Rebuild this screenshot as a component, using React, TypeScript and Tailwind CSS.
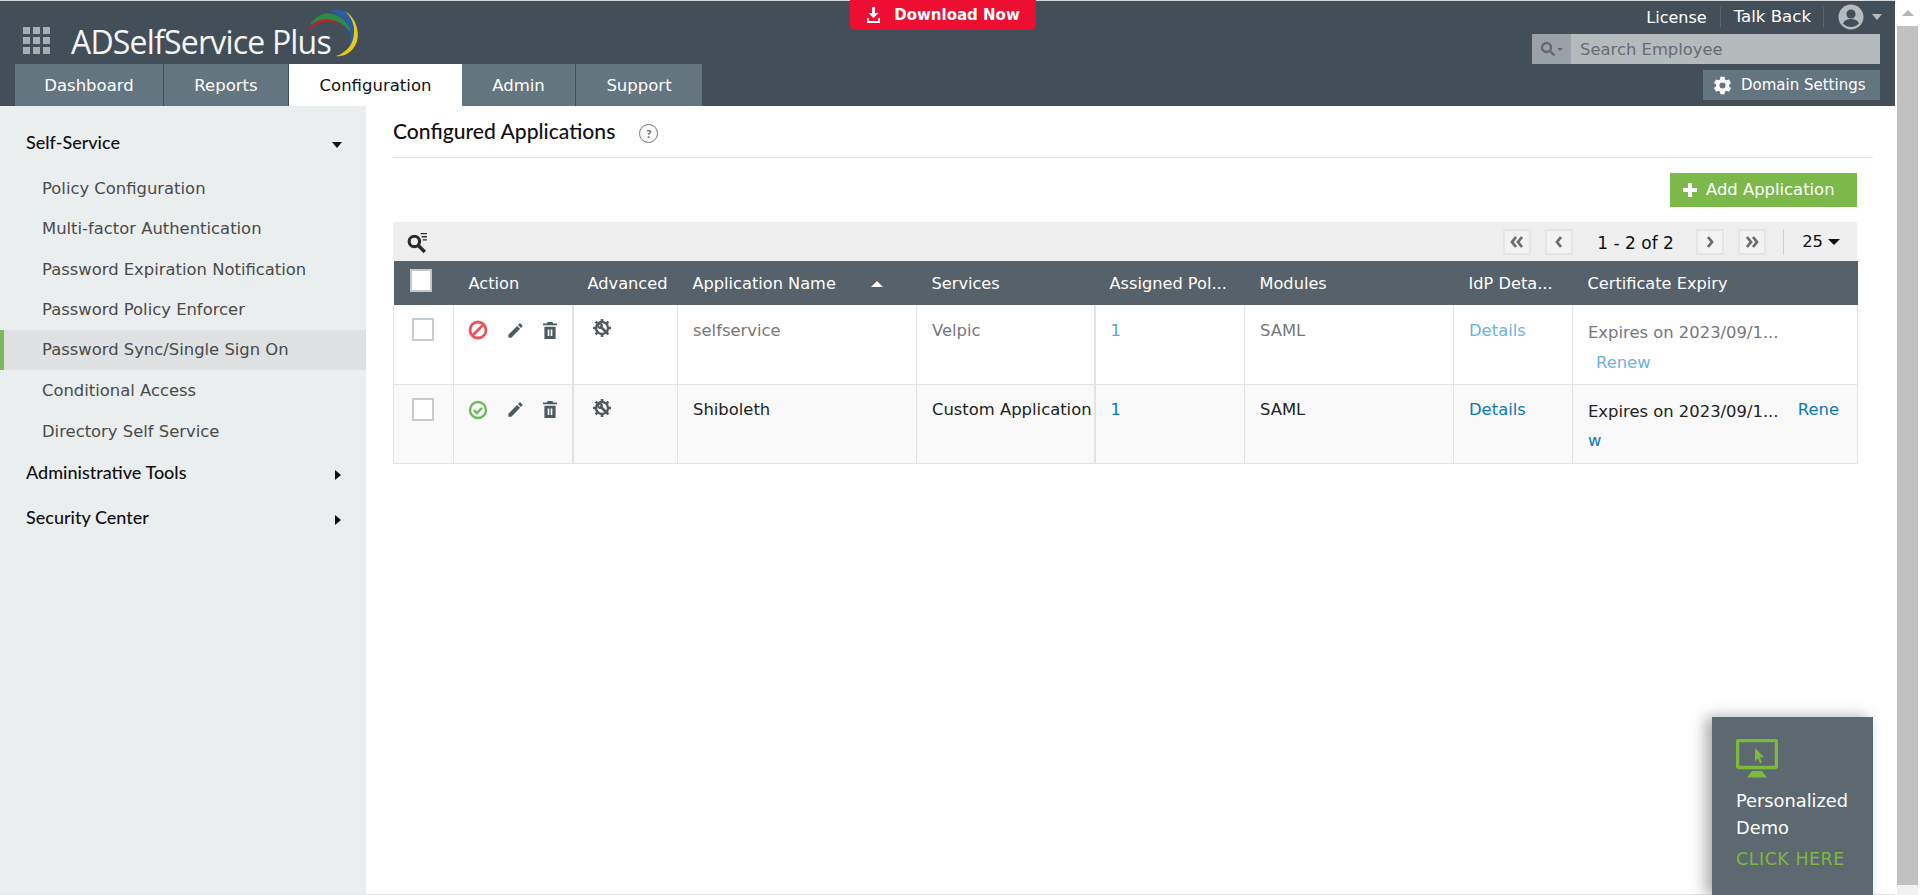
import React from "react";

const body = "font-['DejaVu_Sans',sans-serif]";

function Logo() {
  return (
    <svg width="90" height="64" viewBox="0 0 90 64" className="absolute left-[290px] top-[-1px]">
      <path d="M40 11 C52 7 62 14 65 26 C67 34 64 41 60 45 C63 31 55 15 40 11 Z" fill="#2a5ca5" />
      <path d="M20 25 C28 11 46 9 57 24 C60 28 60 30 60 32 C52 20 36 15 20 25 Z" fill="#2e8b45" />
      <path d="M18 33 C21 20 38 14 50 25 C38 19 26 21 18 33 Z" fill="#c81e2e" />
      <path d="M55 11 C69 20 72 40 62 50 C57 55 51 57 46 56 C56 53 63 45 64 34 C65 24 61 17 55 11 Z" fill="#e8c81a" />
    </svg>
  );
}

function Pencil() {
  return (
    <svg width="19" height="19" viewBox="0 0 24 24" fill="#4c5a62">
      <path d="M3 17.250V21h3.750L17.810 9.940l-3.750-3.750L3 17.250zM20.710 7.040a1 1 0 0 0 0-1.410l-2.340-2.340a1 1 0 0 0-1.410 0l-1.830 1.830 3.750 3.750 1.830-1.830z" />
    </svg>
  );
}

function Trash() {
  return (
    <svg width="14" height="17" viewBox="0 0 15 18" fill="#4c5a62">
      <path d="M5 0h5l1 1.500h4V3.500H0V1.500h4L5 0z" />
      <path d="M1.500 5h12v13h-12V5zM5 8v7h1.800V8H5zm3.200 0v7H10V8H8.200z" fillRule="evenodd" />
    </svg>
  );
}

function GearWrench() {
  return (
    <svg width="20" height="20" viewBox="0 0 20 20" fill="none" stroke="#55595d">
      <circle cx="10" cy="10" r="6" strokeWidth="2.400" />
      <path strokeWidth="2.600" d="M10 1v2.500M10 16.500V19M1 10h2.500M16.500 10H19M3.600 3.600l1.800 1.800M14.600 14.600l1.800 1.800M16.400 3.600l-1.800 1.800M5.400 14.600l-1.800 1.800" />
      <path d="M8 8l7 7" strokeWidth="2.600" />
      <circle cx="8" cy="8" r="2" strokeWidth="1.800" />
    </svg>
  );
}

function StatusBan() {
  return (
    <svg width="20" height="20" viewBox="0 0 20 20" fill="none" stroke="#e9545a" strokeWidth="2.800">
      <circle cx="10" cy="10" r="8" />
      <path d="M15.500 4.500l-11 11" />
    </svg>
  );
}

function StatusOk() {
  return (
    <svg width="20" height="20" viewBox="0 0 20 20" fill="none" stroke="#6dbb5f" strokeWidth="2.400">
      <circle cx="10" cy="10" r="8" />
      <path d="M6 10.200l3 3 5-5.400" />
    </svg>
  );
}

function Checkbox({ header }: { header?: boolean }) {
  return (
    <span
      className={
        header
          ? "block w-[22px] h-[23px] bg-white border-2 border-[#c4c8cb]"
          : "block w-[22px] h-[23px] bg-white border-2 border-[#c9cccf]"
      }
    />
  );
}

function PageBtn({ children }: { children: React.ReactNode }) {
  return (
    <span className="w-[28px] h-[26px] flex items-center justify-center border-2 border-[#e6e6e6] bg-[#f3f3f3]">
      {children}
    </span>
  );
}

function Chevrons({ dir, double }: { dir: "l" | "r"; double?: boolean }) {
  const d = dir === "l" ? "M6 1L2 6l4 5" : "M2 1l4 5-4 5";
  const d2 = dir === "l" ? "M12 1L8 6l4 5" : "M8 1l4 5-4 5";
  return (
    <svg width={double ? 14 : 8} height="12" viewBox={double ? "0 0 14 12" : "0 0 8 12"} fill="none" stroke="#6c6c6c" strokeWidth="2.800">
      <path d={d} />
      {double && <path d={d2} />}
    </svg>
  );
}

const sideItems = [
  "Policy Configuration",
  "Multi-factor Authentication",
  "Password Expiration Notification",
  "Password Policy Enforcer",
  "Password Sync/Single Sign On",
  "Conditional Access",
  "Directory Self Service",
];

const tabs = [
  { t: "Dashboard", w: "w-[149px]" },
  { t: "Reports", w: "w-[125px]" },
  { t: "Configuration", w: "w-[173px]", active: true },
  { t: "Admin", w: "w-[114px]" },
  { t: "Support", w: "w-[127px]" },
];

const th = "text-left font-normal text-white pl-[15px] pt-[2px] whitespace-nowrap overflow-hidden text-[16.200px]";
const td = "align-top pl-[15px] pt-[13px] leading-[24px] border-r border-b border-[#e3e3e3] whitespace-nowrap overflow-hidden";
const tdFirst = "align-top pl-[15px] pt-[14px] leading-[24px] border-r border-b border-[#e3e3e3] whitespace-nowrap overflow-hidden";

export default function App() {
  return (
    <div className={`relative flex h-[895px] w-full overflow-hidden bg-white text-[16.400px] ${body}`}>
      <div className="flex flex-col w-[1895px] shrink-0 h-full border-b border-[#e3e5e6]">
        <header className="relative flex justify-between h-[106px] shrink-0 bg-[#434f58] border-t border-[#d4d6d8]">
          <div className="relative flex flex-col justify-end pl-[15px]">
            <div className="absolute left-[23px] top-[26px] grid grid-cols-3 gap-[3px]">
              {Array.from({ length: 9 }).map((_, i) => (
                <span key={i} className="w-[7px] h-[7px] bg-[#a9aeb2]" />
              ))}
            </div>
            <span className="absolute left-[71px] top-[22px] text-[32px] leading-[38px] text-[#f4f5f5] font-['Open_Sans',sans-serif] tracking-[-0.800px] whitespace-nowrap">
              ADSelfService Plus
            </span>
            <Logo />
            <nav className="flex h-[42px]">
              {tabs.map((t) => (
                <span
                  key={t.t}
                  className={
                    t.active
                      ? `${t.w} flex items-center justify-center pt-[2px] bg-white text-[#111] text-[16.500px]`
                      : `${t.w} flex items-center justify-center pt-[2px] bg-[#63757f] text-white text-[16.500px] border-r border-[#434f58]`
                  }
                >
                  {t.t}
                </span>
              ))}
            </nav>
          </div>
          <span className="absolute left-[850px] top-[-1px] w-[186px] h-[30px] bg-[#ee0e32] rounded-b-[5px] flex items-center justify-center gap-[13px] text-white text-[15px] font-bold">
            <svg width="15" height="16" viewBox="0 0 15 16" fill="#fff">
              <path d="M6 0h3v6h3.500L7.500 11 2.500 6H6V0z" />
              <path d="M1 11h1.800v3h9.400v-3H14v5H1z" />
            </svg>
            Download Now
          </span>
          <div className="flex flex-col items-end pr-[15px]">
            <div className="flex items-center h-[31px] text-white text-[16.400px]">
              <span className="pt-[2px] text-[16px]">License</span>
              <span className="w-px h-[20px] bg-[#5b6770] mx-[13px]" />
              <span className="pt-[2px] text-[16.600px]">Talk Back</span>
              <span className="w-px h-[20px] bg-[#5b6770] ml-[12px] mr-[13px]" />
              <svg width="26" height="26" viewBox="0 0 26 26" className="ml-px">
                <circle cx="13" cy="13" r="12.500" fill="#b4babd" />
                <circle cx="13" cy="10" r="4.600" fill="#434f58" />
                <path d="M5 19.500c1.500-3.500 5-4.500 8-4.500s6.500 1 8 4.500c-2 2-5 3.500-8 3.500s-6-1.500-8-3.500z" fill="#434f58" />
              </svg>
              <span className="ml-[8px] mr-[-2px] w-0 h-0 border-x-[5.500px] border-x-transparent border-t-[6px] border-t-[#b4babd]" />
            </div>
            <div className="flex w-[348px] h-[30px] mt-[2px] bg-[#b5babd]">
              <span className="w-[39px] bg-[#9aa2a7] flex items-center justify-center gap-[1px]">
                <svg width="18" height="16" viewBox="0 0 18 16" fill="none" stroke="#5f6b72" strokeWidth="2.400">
                  <circle cx="6.500" cy="6.500" r="4.500" />
                  <path d="M10 10l4.500 4.500" />
                </svg>
                <span className="w-0 h-0 border-x-[3px] border-x-transparent border-t-[3px] border-t-[#5f6b72] ml-[-2px]" />
              </span>
              <span className="flex items-center pl-[9px] pt-[2px] text-[#666e73] text-[16.400px]">Search Employee</span>
            </div>
            <div className="flex items-center w-[177px] h-[30px] mt-[6px] bg-[#63757f] text-white text-[15px] pl-[9px] gap-[8px]">
              <svg width="21" height="21" viewBox="0 0 24 24" fill="#fff">
                <path d="M19.400 13a7.500 7.500 0 0 0 0-2l2.400-1.900-2.400-4.100-2.800 1.100a7.500 7.500 0 0 0-1.800-1L14.400 2H9.600l-.4 3.100a7.500 7.500 0 0 0-1.800 1L4.600 5 2.200 9.100 4.600 11a7.500 7.500 0 0 0 0 2l-2.400 1.900 2.400 4.100 2.800-1.100a7.500 7.500 0 0 0 1.800 1l.4 3.100h4.800l.4-3.100a7.500 7.500 0 0 0 1.800-1l2.800 1.100 2.400-4.100zM12 15.500a3.500 3.500 0 1 1 0-7 3.500 3.500 0 0 1 0 7z" />
              </svg>
              Domain Settings
            </div>
          </div>
        </header>

        <div className="flex flex-1 min-h-0">
          <aside className="w-[366px] shrink-0 bg-[#ebeeef] pt-[16px]">
            <div className="flex items-center justify-between h-[40px] pl-[26px] pr-[24px] text-[18px] font-medium text-[#111] font-['Lato',sans-serif]">
              Self-Service
              <span className="w-0 h-0 border-x-[5px] border-x-transparent border-t-[6px] border-t-[#111] mt-[5px]" />
            </div>
            <div className="h-[6px]" />
            {sideItems.map((s, i) => (
              <div
                key={s}
                className={
                  i === 4
                    ? "flex items-center h-[40px] pl-[38px] pt-[1px] bg-[#e0e1e3] border-l-[4px] border-[#7db85c] text-[#4a4a4a]"
                    : i > 4
                    ? "flex items-center h-[41px] pl-[42px] pt-[2px] text-[#4a4a4a]"
                    : "flex items-center h-[40.500px] pl-[42px] pt-[2px] text-[#4a4a4a]"
                }
              >
                {s}
              </div>
            ))}
            <div className="-mt-[2px]">
              {["Administrative Tools", "Security Center"].map((s) => (
                <div key={s} className="flex items-center justify-between h-[45px] pl-[26px] pr-[25px] text-[18px] font-medium text-[#111] font-['Lato',sans-serif]">
                  {s}
                  <span className="w-0 h-0 border-y-[5px] border-y-transparent border-l-[6px] border-l-[#111] mt-[5px]" />
                </div>
              ))}
            </div>
          </aside>

          <main className="flex-1 min-w-0 pl-[27px] pr-[22px]">
            <div className="flex items-center h-[52px] pb-[2px] border-b border-[#e3e3e3] font-['Lato',sans-serif] text-[21.100px] font-medium text-[#111]">
              Configured Applications
              <span className="ml-[24px] mt-[6px] w-[19px] h-[19px] rounded-full border-[1.500px] border-[#777] text-[#666] text-[12px] leading-none flex items-center justify-center font-bold">
                ?
              </span>
            </div>
            <div className="w-[1464px]">
              <div className="flex justify-end pt-[15px] pb-[15px]">
                <span className="flex items-center w-[187px] h-[34px] bg-[#7db84b] text-white text-[16.400px] pl-[13px] gap-[9px]">
                  <svg width="14" height="14" viewBox="0 0 14 14" fill="#fff">
                    <path d="M5 0h4v5h5v4H9v5H5V9H0V5h5z" />
                  </svg>
                  Add Application
                </span>
              </div>
              <div className="flex items-center h-[39px] bg-[#efefef] pl-[13px]">
                <svg width="23" height="23" viewBox="0 0 22 22" fill="none" stroke="#2c2c2c" className="mt-[2px]">
                  <circle cx="8" cy="10" r="5" strokeWidth="3" />
                  <path d="M12 14l6 6" strokeWidth="3.400" />
                  <path d="M14 2.500h6M15 5.500h5M16 8.500h4" strokeWidth="1.200" />
                </svg>
                <div className="ml-auto flex items-center">
                  <PageBtn><Chevrons dir="l" double /></PageBtn>
                  <span className="w-[14px]" />
                  <PageBtn><Chevrons dir="l" /></PageBtn>
                  <span className="w-[123px] pl-[2px] text-center text-[#111] text-[17px] mt-[4px]">1 - 2 of 2</span>
                  <PageBtn><Chevrons dir="r" /></PageBtn>
                  <span className="w-[14px]" />
                  <PageBtn><Chevrons dir="r" double /></PageBtn>
                  <span className="w-px h-[26px] bg-[#cfcfcf] ml-[17px] mr-[18px]" />
                  <span className="text-[#111] text-[16.400px] mt-[1px]">25</span>
                  <span className="ml-[5px] mr-[17px] w-0 h-0 border-x-[6.500px] border-x-transparent border-t-[6.500px] border-t-[#111]" />
                </div>
              </div>
              <table className="table-fixed border-collapse w-[1464px]">
                <colgroup>
                  <col className="w-[60px]" />
                  <col className="w-[119px]" />
                  <col className="w-[105px]" />
                  <col className="w-[239px]" />
                  <col className="w-[178px]" />
                  <col className="w-[150px]" />
                  <col className="w-[209px]" />
                  <col className="w-[119px]" />
                  <col className="w-[285px]" />
                </colgroup>
                <thead>
                  <tr className="h-[44px] bg-[#566169]">
                    <th className="pl-[16px] align-top pt-[8px]"><Checkbox header /></th>
                    <th className={th}>Action</th>
                    <th className={th}>Advanced</th>
                    <th className={th}>
                      <span className="flex items-center justify-between pr-[34px]">
                        Application Name
                        <span className="w-0 h-0 border-x-[6px] border-x-transparent border-b-[6px] border-b-white" />
                      </span>
                    </th>
                    <th className={th}>Services</th>
                    <th className={th}>Assigned Pol...</th>
                    <th className={th}>Modules</th>
                    <th className={th}>IdP Deta...</th>
                    <th className={th}>Certificate Expiry</th>
                  </tr>
                </thead>
                <tbody>
                  <tr className="h-[79px] bg-white text-[#777]">
                    <td className="align-top pl-[18px] pt-[13px] border-x border-b border-[#e3e3e3]"><Checkbox /></td>
                    <td className={`${td} border-r-[2px]`}>
                      <span className="flex items-center pt-[2px] -ml-px"><StatusBan /><span className="w-[18px]" /><Pencil /><span className="w-[18px]" /><Trash /></span>
                    </td>
                    <td className={td}><span className="block pl-[3px]"><GearWrench /></span></td>
                    <td className={tdFirst}>selfservice</td>
                    <td className={`${tdFirst} border-r-[2px]`}>Velpic</td>
                    <td className={`${tdFirst} text-[#5ba6d4]`}>1</td>
                    <td className={tdFirst}>SAML</td>
                    <td className={`${tdFirst} text-[#6db3dc]`}>Details</td>
                    <td className={td}>
                      <div className="leading-[30px]">Expires on 2023/09/1...</div>
                      <div className="pl-[8px] leading-[30px] text-[#6db3dc]">Renew</div>
                    </td>
                  </tr>
                  <tr className="h-[79px] bg-[#f9f9f9] text-[#222]">
                    <td className="align-top pl-[18px] pt-[13px] border-x border-b border-[#e3e3e3]"><Checkbox /></td>
                    <td className={`${td} border-r-[2px]`}>
                      <span className="flex items-center pt-[2px] -ml-px"><StatusOk /><span className="w-[18px]" /><Pencil /><span className="w-[18px]" /><Trash /></span>
                    </td>
                    <td className={td}><span className="block pl-[3px]"><GearWrench /></span></td>
                    <td className={td}>Shiboleth</td>
                    <td className={`${td} border-r-[2px]`}>Custom Application</td>
                    <td className={`${td} text-[#0b78b8]`}>1</td>
                    <td className={td}>SAML</td>
                    <td className={`${td} text-[#0b78b8]`}>Details</td>
                    <td className={td}>
                      <div className="flex justify-between pr-[18px]">
                        <span className="pt-[2px]">Expires on 2023/09/1...</span>
                        <span className="text-[#0b78b8]">Rene</span>
                      </div>
                      <div className="leading-[34px] text-[#0b78b8]">w</div>
                    </td>
                  </tr>
                </tbody>
              </table>
            </div>
          </main>
        </div>
      </div>

      <div className="w-[25px] shrink-0 bg-white pl-[2px] pr-[2px] flex flex-col">
        <div className="h-[26px] flex items-center justify-center">
          <span className="w-0 h-0 border-x-[6px] border-x-transparent border-b-[6px] border-b-[#b5b5b5]" />
        </div>
        <div className="h-[859px] bg-[#c1c1c1]" />
        <div className="flex-1 bg-[#f1f1f1]" />
      </div>

      <div className="absolute left-[1712px] top-[717px] w-[161px] h-[178px] bg-[#5c6970] shadow-[-6px_0_14px_rgba(0,0,0,0.35)] pl-[24px] pt-[22px]">
        <svg width="42" height="39" viewBox="0 0 42 39">
          <rect x="1.500" y="1.500" width="39" height="27" rx="1.500" fill="none" stroke="#7db83f" strokeWidth="3.500" />
          <path d="M19 9l9 9-4 .5 2 5-2 1-2-5-3 3z" fill="#7db83f" />
          <path d="M16 32h10l5 6.500H11z" fill="#7db83f" />
        </svg>
        <div className="text-white text-[17.800px] leading-[27px] mt-[9px] font-medium">Personalized<br />Demo</div>
        <div className="text-[#7db83f] text-[17.500px] tracking-[0.500px] mt-[8px] leading-[20px]">CLICK HERE</div>
      </div>
    </div>
  );
}
